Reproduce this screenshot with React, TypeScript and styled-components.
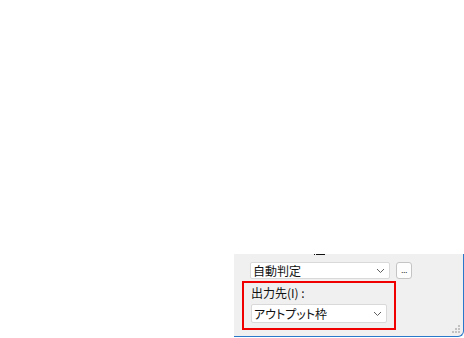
import React from 'react'
import styled, { createGlobalStyle } from 'styled-components'

const GlobalStyle = createGlobalStyle`
	html, body {
		margin: 0;
		padding: 0;
		background: #ffffff;
	}
	body {
		font-family: 'Noto Sans CJK JP', 'Noto Sans', sans-serif;
	}
`

const Page = styled.div`
	width: 464px;
	height: 338px;
	display: flex;
	justify-content: flex-end;
	align-items: flex-start;
	padding-top: 254px;
	box-sizing: border-box;
`

const Panel = styled.div`
	position: relative;
	width: 230px;
	height: 83px;
	box-sizing: border-box;
	background: #f0f0f0;
	border-right: 1px solid #2a78c9;
	border-bottom: 1px solid #2a78c9;
	border-bottom-right-radius: 6px;
	padding: 8px 0 0 8px;
	display: flex;
	flex-direction: column;
`

const CutMark = styled.div`
	position: absolute;
	top: 0;
	left: 82px;
	width: 9px;
	height: 1px;
	background: #111;
	&::before {
		content: '';
		position: absolute;
		left: -2px;
		top: 0;
		width: 1px;
		height: 1px;
		background: #111;
	}
`

const Row = styled.div`
	display: flex;
	align-items: center;
	gap: 6px;
	padding-left: 8px;
`

const Combo = styled.div<{ $width: number; $height: number }>`
	width: ${(p) => p.$width}px;
	height: ${(p) => p.$height}px;
	box-sizing: border-box;
	background: #ffffff;
	border: 1px solid #d9d9d9;
	border-radius: 2px;
	display: flex;
	align-items: center;
	justify-content: space-between;
	padding: 0 4px 0 2px;
	font-size: 12px;
	color: #111;
	font-feature-settings: 'palt';
	line-height: 1;
`

const Chevron = () => (
	<svg width="9" height="6" viewBox="0 0 9 6">
		<path d="M1 1 L4.5 4.5 L8 1" fill="none" stroke="#606060" strokeWidth="1" />
	</svg>
)

const DotsButton = styled.button`
	width: 16px;
	height: 17px;
	box-sizing: border-box;
	padding: 0 0 3px;
	background: #fdfdfd;
	border: 1px solid #c4c4c4;
	border-radius: 3px;
	font-family: 'Liberation Sans', sans-serif;
	font-size: 9px;
	color: #222;
	display: flex;
	align-items: flex-end;
	justify-content: center;
	letter-spacing: -0.5px;
`

const Highlight = styled.div`
	margin-top: 2px;
	width: 154px;
	height: 49px;
	box-sizing: border-box;
	border: 2px solid #f00000;
	padding: 2px 0 0 7px;
	display: flex;
	flex-direction: column;
`

const Label = styled.div`
	font-size: 12px;
	color: #111;
	line-height: 16px;
	height: 17px;
	margin-bottom: 2px;
`

const Grip = styled.div`
	position: absolute;
	right: 2px;
	bottom: 2px;
	width: 9px;
	height: 9px;
	display: grid;
	grid-template-columns: repeat(3, 2px);
	grid-template-rows: repeat(3, 2px);
	gap: 1px;
`

const GripDot = styled.span<{ $on: boolean }>`
	width: 2px;
	height: 2px;
	background: ${(p) => (p.$on ? '#c2c2c2' : 'transparent')};
`

const App: React.FC = () => {
	const grip = [0, 0, 1, 0, 1, 1, 1, 1, 1]
	return (
		<>
			<GlobalStyle />
			<Page>
				<Panel>
					<CutMark />
					<Row>
						<Combo $width={140} $height={17}>
							<span>自動判定</span>
							<Chevron />
						</Combo>
						<DotsButton>...</DotsButton>
					</Row>
					<Highlight>
						<Label>出力先(I) :</Label>
						<Combo $width={136} $height={19}>
							<span>アウトプット枠</span>
							<Chevron />
						</Combo>
					</Highlight>
					<Grip>
						{grip.map((on, i) => (
							<GripDot key={i} $on={on === 1} />
						))}
					</Grip>
				</Panel>
			</Page>
		</>
	)
}

export default App
